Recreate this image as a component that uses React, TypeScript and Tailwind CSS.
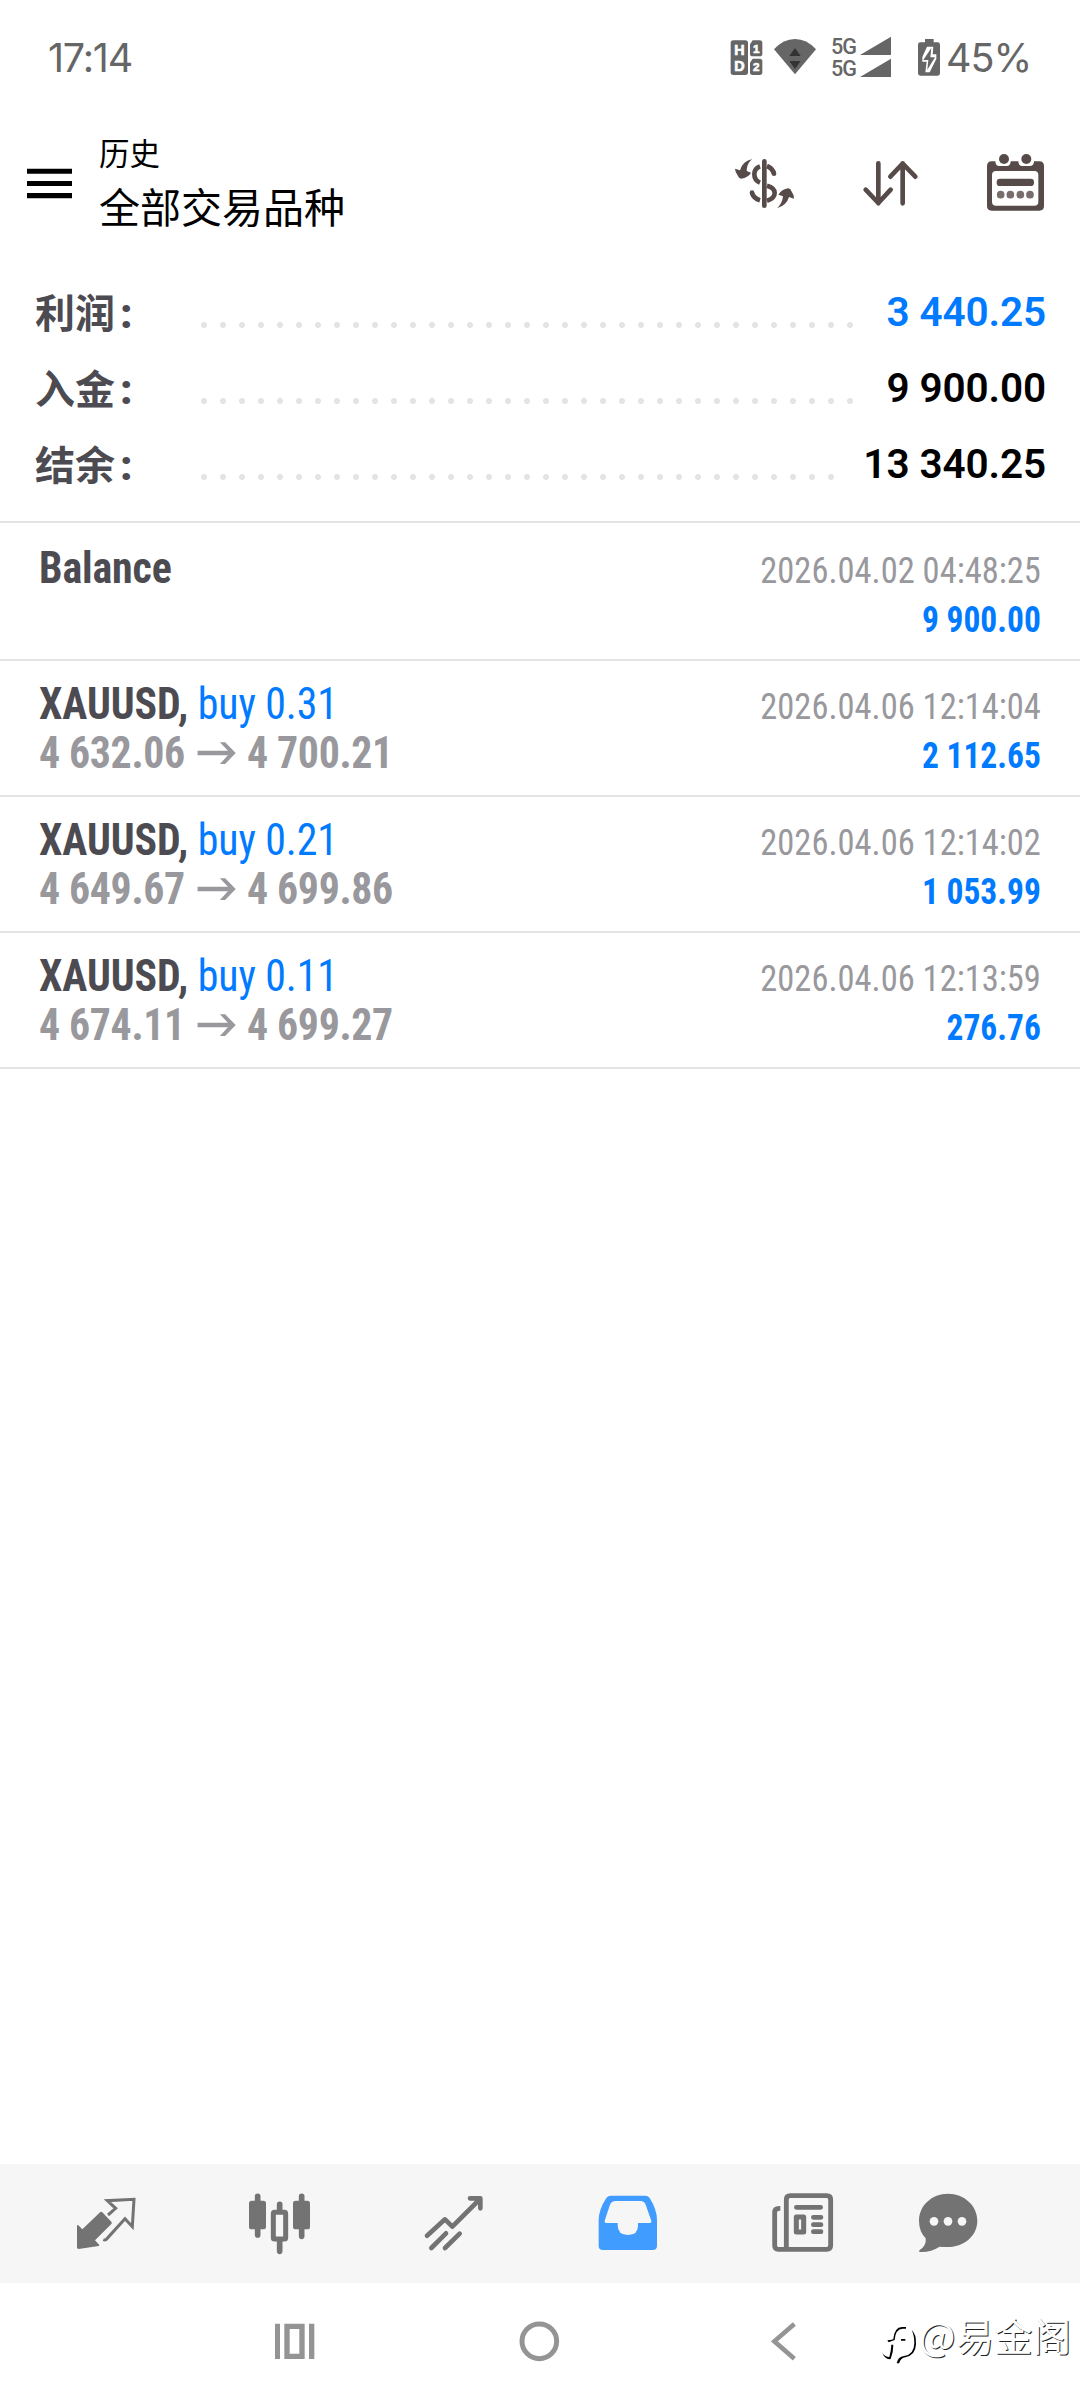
import { ReactNode } from "react";

type Deal = {
  id: number;
  symbol: string;
  side?: string;
  open?: string;
  close?: string;
  time: string;
  profit: string;
};

const summary = [
  { label: "利润", value: "3 440.25", color: "text-[#007aff]" },
  { label: "入金", value: "9 900.00", color: "text-black" },
  { label: "结余", value: "13 340.25", color: "text-black" },
];

const deals: Deal[] = [
  { id: 1, symbol: "Balance", time: "2026.04.02 04:48:25", profit: "9 900.00" },
  { id: 2, symbol: "XAUUSD,", side: "buy 0.31", open: "4 632.06", close: "4 700.21", time: "2026.04.06 12:14:04", profit: "2 112.65" },
  { id: 3, symbol: "XAUUSD,", side: "buy 0.21", open: "4 649.67", close: "4 699.86", time: "2026.04.06 12:14:02", profit: "1 053.99" },
  { id: 4, symbol: "XAUUSD,", side: "buy 0.11", open: "4 674.11", close: "4 699.27", time: "2026.04.06 12:13:59", profit: "276.76" },
];

const cjk = "font-['Noto_Sans_CJK_SC',sans-serif]";

function Icon({ box, className, children }: { box: string; className: string; children: ReactNode }) {
  return (
    <svg viewBox={box} className={`shrink-0 ${className}`} fill="currentColor">
      {children}
    </svg>
  );
}

function StatusBar() {
  return (
    <div className="flex h-[115px] items-start pt-[35px] pl-12 text-[#666666]">
      <span className="w-[682px] font-['Inter',sans-serif] text-[39.5px] leading-[46px] tracking-[-1.2px]">17:14</span>

      {/* HD 1/2 */}
      <Icon box="90 60 99 108" className="mt-[5px] h-9 w-[33px]">
        <rect x="92" y="61" width="52" height="104" rx="8" />
        <path d="M158 61h21q8 0 8 8v32q0 8-8 8h-21q-8 0-8-8v-28z" />
        <path d="M158 116h21q8 0 8 8v33q0 8-8 8h-21q-8 0-8-8v-29z" />
        <g fill="#fff" stroke="#fff" strokeWidth="2" fontFamily="Liberation Sans, sans-serif" fontWeight="700" textAnchor="middle">
          <text x="118" y="105" fontSize="43">H</text>
          <text x="118" y="154" fontSize="43">D</text>
          <text x="169" y="99" fontSize="35">1</text>
          <text x="169" y="154" fontSize="35">2</text>
        </g>
      </Icon>

      {/* wifi */}
      <Icon box="222 54 126 111" className="mt-[3px] ml-[11px] h-[37px] w-[42px]">
        <path d="M285 163 222 88q28-31 63-31t63 31z" />
        <path d="M285 84l17 24h-34zM285 147l-17-24h34z" fill="#333" />
      </Icon>

      <div className="ml-[15px] flex h-[44px] w-[29px] flex-col font-['Roboto',sans-serif] text-[22.5px] leading-[22px] font-medium tracking-[-1px]">
        <span className="origin-left scale-x-[0.96]">5G</span>
        <span className="origin-left scale-x-[0.96]">5G</span>
      </div>
      <Icon box="483 48 93 126" className="mt-px h-[42px] w-[31px]">
        <path d="M576 50v55h-93zM576 116v55h-93z" />
      </Icon>

      <Icon box="657 54 66 114" className="mt-[3px] ml-[27px] h-[38px] w-[22px]">
        <path d="M678 57h26v10h12q7 0 7 7v86q0 7-7 7h-52q-7 0-7-7V74q0-7 7-7h14z" />
        <path d="M684 80h19l-2 23h11v14l-20 40h-13l4-32h-13v-14z" fill="#fff" />
        <path d="M697 84l-24 36h15l-3 29 23-37h-14z" />
      </Icon>
      <span className="ml-1.5 font-['Inter',sans-serif] text-[39.5px] leading-[46px] tracking-[-1px]">45%</span>
    </div>
  );
}

function Header() {
  return (
    <header className="flex h-[150px] items-start pl-[27px]">
      <Icon box="81 444 135 93" className="mt-[53px] h-[31px] w-[45px]">
        <path d="M81 446h135v15H81zM81 483h135v15H81zM81 519h135v16H81z" />
      </Icon>
      <div className={`ml-[27px] w-[636px] pt-[15px] text-black ${cjk}`}>
        <div className="text-[30.5px] leading-[44px]">历史</div>
        <div className="text-[41px] leading-[62px]">全部交易品种</div>
      </div>
      <div className="flex gap-[66px] pt-[38px] text-[#564b48]">
        <Icon box="105 69 180 180" className="size-[60px]">
          <path d="M193 94v133" stroke="currentColor" strokeWidth="14" strokeLinecap="round" />
          <path d="M201 108q15 6 21 22M180 109q-17 6-17 24t17 25M201 167q23 6 23 22t-23 23M156 189q5 16 24 22" fill="none" stroke="currentColor" strokeWidth="14" />
          <circle cx="222" cy="131" r="7" />
          <circle cx="156" cy="188" r="7" />
          <path d="M156 87q-16 15-16 36l13 5q-7 14-30 18-7-1-9-8-9-12-9-22l15 5q6-26 36-34z" />
          <path d="M231 235q16-15 18-36l-14-5q10-16 30-19 7 1 9 8 8 11 8 23l-15-5q-7 25-36 34z" />
        </Icon>
        <Icon box="483 69 180 180" className="size-[60px]">
          <path d="M535 100v120M497 179l38 40 37-40M608 220V100M571 140l37-39 38 39" fill="none" stroke="currentColor" strokeWidth="14" strokeLinecap="round" strokeLinejoin="round" />
        </Icon>
        <Icon box="858 69 180 180" className="-ml-px size-[60px]">
          <path fillRule="evenodd" d="M875 94q-14 0-14 14v120q0 14 14 14h143q14 0 14-14V108q0-14-14-14h-16q0 14-13 14h-22q-12 0-12-14h-23q0 14-12 14h-22q-12 0-12-14zM888 123h115q12 0 12 12v80q0 12-12 12H888q-12 0-12-12v-80q0-12 12-12z" />
          <circle cx="912" cy="87" r="19" fill="#fff" />
          <circle cx="979" cy="87" r="19" fill="#fff" />
          <circle cx="912" cy="87" r="15" />
          <circle cx="979" cy="87" r="15" />
          <rect x="890" y="146" width="112" height="22" rx="10" />
          <g opacity=".8">
            <circle cx="902" cy="194" r="11.500" />
            <circle cx="931" cy="194" r="11.500" />
            <circle cx="961" cy="194" r="11.500" />
            <circle cx="990" cy="194" r="11.500" />
          </g>
        </Icon>
      </div>
    </header>
  );
}

function Summary() {
  return (
    <section className="h-[258px] border-b-2 border-[#e4e4e4] pt-[9px] pr-[34px] pl-[35px]">
      {summary.map((s) => (
        <div key={s.label} className="flex h-[76px] items-center">
          <div className={`w-[166px] text-[40px] leading-[76px] font-bold text-[#4c4b52] ${cjk}`}>
            {s.label}
            <span className="ml-[5px] font-['Roboto',sans-serif] text-[42px] font-black">:</span>
          </div>
          <div className="mt-[26px] mr-6 h-1.5 flex-1 bg-[radial-gradient(circle_at_3px_3px,#e4e4e4_2.7px,transparent_3.3px)] bg-[length:19px_6px] bg-repeat-x" />
          <div className={`font-['Roboto',sans-serif] text-[40.5px] leading-[76px] font-semibold tracking-[-0.1px] ${s.color}`}>{s.value}</div>
        </div>
      ))}
    </section>
  );
}

function DealRow({ deal }: { deal: Deal }) {
  return (
    <div className="flex h-[136px] justify-between border-b-2 border-[#e4e4e4] pr-[39px] pl-[39px] font-['Roboto',sans-serif] font-stretch-condensed first:h-[138px] first:pt-0.5">
      <div className="origin-left scale-x-[0.93] pt-[18px] text-[45px] leading-[49px] font-bold">
        <div className="tracking-[-0.1px] text-[#4c4b52]">
          {deal.symbol}
          {deal.side && <span className="font-normal text-[#007aff]"> {deal.side}</span>}
        </div>
        {deal.open && (
          <div className="flex items-center tracking-[-0.4px] text-[#98989d]">
            {deal.open}
            <Icon box="588 694 123 66" className="mr-[11px] ml-3 h-[22px] w-11">
              <path d="M588 720h98l-26-25h17l34 32-34 33h-17l26-26h-98z" />
            </Icon>
            {deal.close}
          </div>
        )}
      </div>
      <div className="pt-[22px] text-right text-[36px] leading-[49px]">
        <div className="origin-right scale-x-[0.958] text-[#98989d]">{deal.time}</div>
        <div className="origin-right scale-x-[0.93] font-bold text-[#007aff]">{deal.profit}</div>
      </div>
    </div>
  );
}

function TabBar() {
  return (
    <nav className="flex h-[119px] shrink-0 items-start gap-[108px] bg-[#f6f6f6] pt-[26px] pl-[73px] text-[#737373]">
      <Icon box="99 90 198 198" className="size-[66px]">
        <path d="M181 156q3-2 6 1l27 28q3 4 0 7l-49 49 13 14q1 2-2 3l-60 9q-5 0-5-5v-65q1-4 4-1l12 12z" />
        <path d="M204 165l23-20-25-23 80-4-5 82-22-24-56 62q-4 3-9 1" fill="none" stroke="currentColor" strokeWidth="9" />
      </Icon>
      <Icon box="621 90 198 198" className="size-[66px]">
        <rect x="627" y="122" width="51" height="86" rx="8" />
        <rect x="759" y="122" width="51" height="86" rx="8" />
        <path d="M653 109v116M785 109v120M719 133v20M719 240v34" stroke="currentColor" strokeWidth="17" strokeLinecap="round" />
        <rect x="700" y="157" width="37" height="80" rx="4" fill="#f6f6f6" stroke="currentColor" strokeWidth="15" />
      </Icon>
      <Icon box="1143 90 198 198" className="size-[66px]">
        <path d="M1161 227l54-49 22 22 83-83M1174 264l44-44M1215 264l44-43M1290 115h31v30" fill="none" stroke="currentColor" strokeWidth="14" strokeLinecap="round" strokeLinejoin="round" />
      </Icon>
      <Icon box="105 90 198 198" className="size-[66px] text-[#409cff]">
        <path fillRule="evenodd" d="M153 107h103q8 0 13 7 22 35 22 66v77q0 13-13 13H129q-13 0-13-13v-77q0-31 23-66 5-7 14-7zM166 123q-11 0-16 11l-16 48q-1 7 6 7h33v7q0 29 31 29t30-29v-7h34q7 0 6-7l-17-48q-4-11-15-11z" />
      </Icon>
      <Icon box="627 90 198 198" className="size-[66px]">
        <path d="M691 107h109q12 0 12 12v137q0 12-12 12H655q-11 0-11-12V157q0-12 14-12h3M679 268V119q0-12 12-12" fill="none" stroke="currentColor" strokeWidth="14.500" />
        <path d="M709 142h73M760 172h23M760 194h23M760 215h23" stroke="currentColor" strokeWidth="14" strokeLinecap="round" />
        <rect x="709" y="171" width="22" height="45" fill="none" stroke="currentColor" strokeWidth="15" strokeLinejoin="round" />
      </Icon>
      <Icon box="1065 90 198 198" className="-ml-7 size-[66px]">
        <path d="M1164 101c49 0 88 36 88 81 0 49-46 87-113 78-18 11-36 17-60 16q-4-2 0-6 21-13 18-35-20-21-20-53c0-45 38-81 87-81z" />
        <g fill="#f6f6f6">
          <circle cx="1122" cy="184" r="13" />
          <circle cx="1164" cy="184" r="13" />
          <circle cx="1206" cy="184" r="13" />
        </g>
      </Icon>
    </nav>
  );
}

function SystemNav() {
  return (
    <div className="flex h-[117px] shrink-0 items-start pt-[37px] pl-[275px] text-[#949494]">
      <Icon box="105 120 120 126" className="h-[42px] w-10">
        <path d="M105 131h15v106h-15zM207 131h16v106h-16z" />
        <path fillRule="evenodd" d="M133 131h61v106h-61zM149 147v74h29v-74z" />
      </Icon>
      <Icon box="837 120 126 126" className="ml-[204px] size-[42px]">
        <circle cx="898" cy="184" r="52" fill="none" stroke="currentColor" strokeWidth="15" />
      </Icon>
      <Icon box="93 120 78 126" className="ml-[210px] h-[42px] w-[26px]">
        <path d="M163 132l-60 52 60 52" fill="none" stroke="currentColor" strokeWidth="14" />
      </Icon>
      {/* watermark */}
      <div className={`ml-[83px] flex text-white ${cjk}`}>
        <Icon box="420 129 120 126" className="mt-[3px] h-[42px] w-10 text-black">
          <path d="M442 181q15-1 18-4 3-35 26-36h12v5h-10q-22 1-24 34l-18 7zM454 194h6q0 24-8 43-16 3-25-18 10 13 21 12 5-17 6-37zM483 177h13v5h-13zM515 150q14 12 13 42-1 33-32 40-13 1-19 18h-7q3-19 22-22 30-3 31-38 0-24-8-40z" />
        </Icon>
        <span className="-mt-[5px] ml-[-1px] text-[38.5px] leading-[38px] [text-shadow:1px_1px_0_#222]">@易金阁</span>
      </div>
    </div>
  );
}

export default function App() {
  return (
    <div className="flex h-[2400px] w-[1080px] flex-col overflow-hidden bg-white">
      <StatusBar />
      <Header />
      <Summary />
      <main className="flex-1">
        {deals.map((d) => (
          <DealRow key={d.id} deal={d} />
        ))}
      </main>
      <TabBar />
      <SystemNav />
    </div>
  );
}
